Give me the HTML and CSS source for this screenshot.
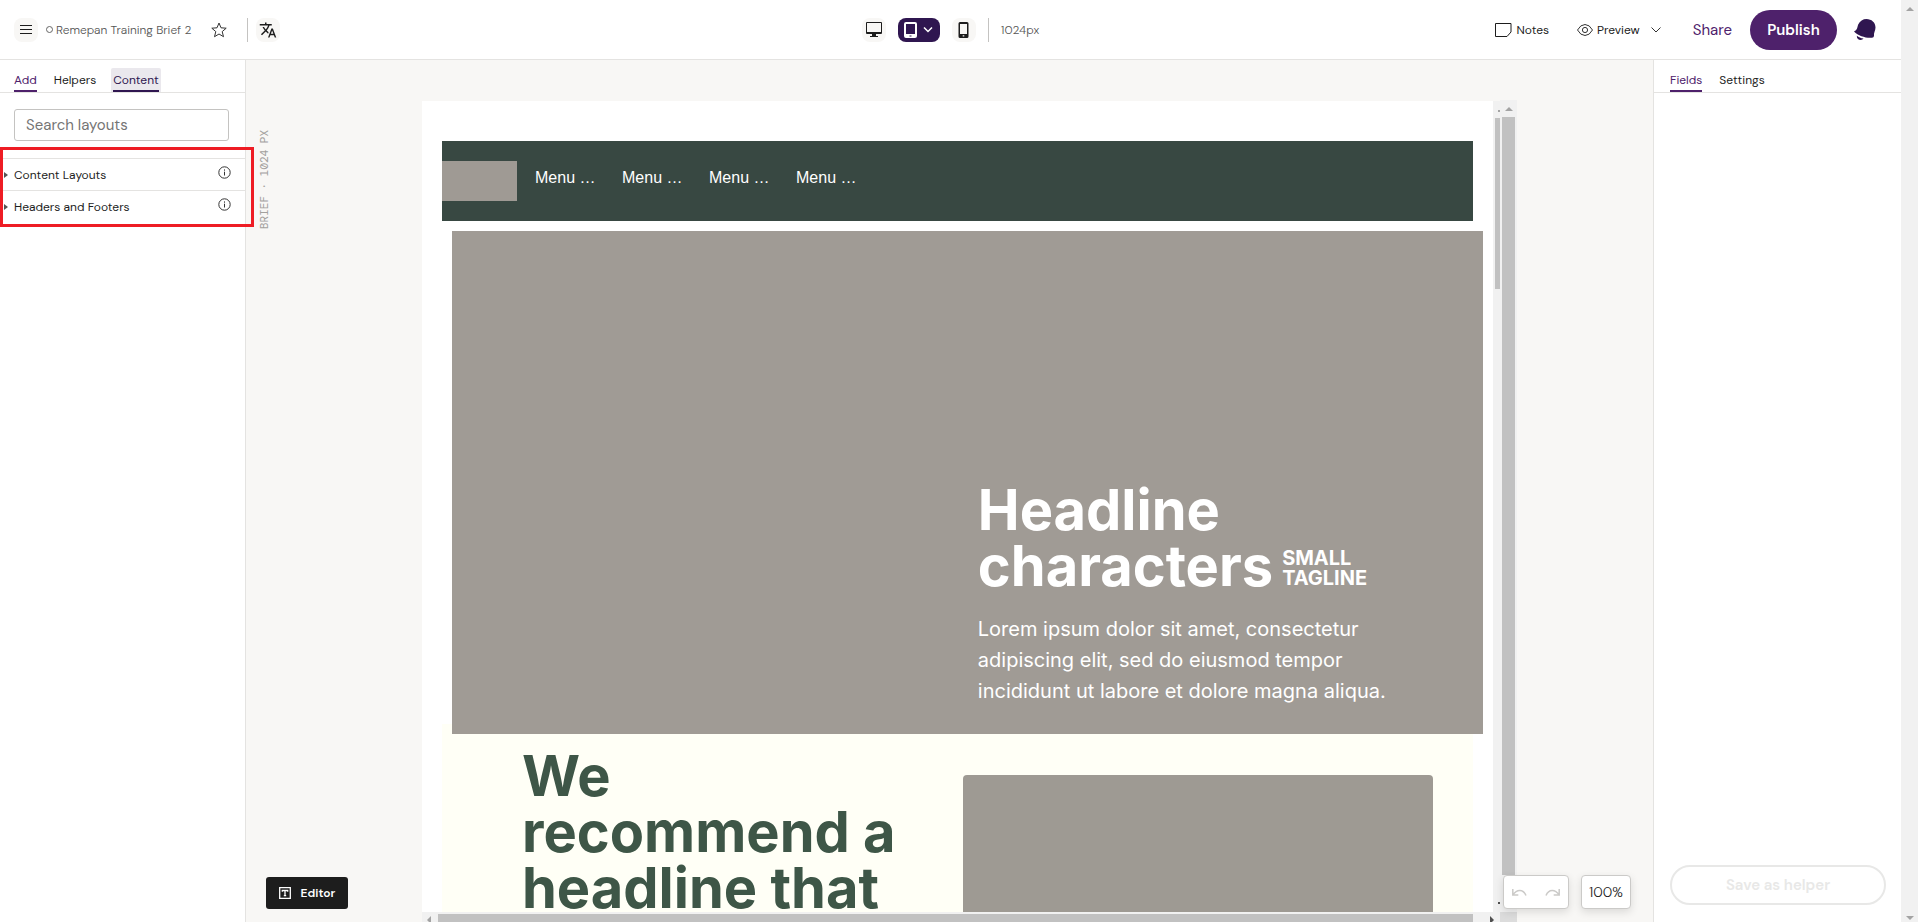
FILE: index.html
```html
<!DOCTYPE html>
<html lang="en">
<head>
    <meta charset="UTF-8">
    <meta name="viewport" content="width=device-width, initial-scale=1.0">
    <title>Remepan Training Brief 2</title>
    <link rel="stylesheet" href="styles.css">
</head>
<body>
    <div class="app">
        <header class="topbar">
            <div class="topbar-left">
                <button class="icon-btn" aria-label="Menu">
                    <svg width="12" height="10" viewBox="0 0 12 10" stroke="#1d1d1d" stroke-width="1"><path d="M0 .5h12M0 4.5h12M0 8.5h12"/></svg>
                </button>
                <span class="status-dot"></span>
                <span class="brief-name">Remepan Training Brief 2</span>
                <button class="plain-btn star-btn" aria-label="Favourite">
                    <svg width="16" height="16" viewBox="0 0 16 16" fill="none" stroke="#333" stroke-linejoin="round"><path d="M8 1l2 4.8 5.2.4-4 3.4 1.3 5.1L8 12l-4.500 2.700 1.300-5.100-4-3.400 5.200-.4z"/></svg>
                </button>
                <span class="divider"></span>
                <button class="icon-btn" aria-label="Translate">
                    <svg width="18" height="18" viewBox="0 0 24 24" fill="#1d1d1d"><path d="M12.870 15.070l-2.540-2.510.03-.03A17.500 17.500 0 0 0 14.070 6H17V4h-7V2H8v2H1v2h11.170C11.500 7.920 10.440 9.750 9 11.350 8.070 10.320 7.300 9.190 6.690 8h-2c.73 1.630 1.730 3.170 2.980 4.560l-5.090 5.020L4 19l5-5 3.110 3.110zM18.500 10h-2L12 22h2l1.120-3h4.750L21 22h2zm-2.620 7l1.620-4.330L19.120 17z"/></svg>
                </button>
            </div>

            <div class="topbar-center">
                <button class="icon-btn" aria-label="Desktop">
                    <svg width="18" height="16" viewBox="0 0 18 16"><path fill="#1d1d1d" fill-rule="evenodd" d="M2 0h14q1 0 1 1v10q0 1-1 1h-5v2h2v1H5v-1h2v-2H2q-1 0-1-1V1q0-1 1-1zm0 1v9h14V1z"/></svg>
                </button>
                <button class="icon-btn tablet-btn" aria-label="Tablet">
                    <svg width="14" height="16" viewBox="0 0 14 16"><path fill="#fff" fill-rule="evenodd" d="M2 0h9q2 0 2 2v12q0 2-2 2H2q-2 0-2-2V2q0-2 2-2zm0 2v10h9V2zm3.500 11.500v1h2v-1z"/></svg>
                    <svg width="10" height="6" viewBox="0 0 10 6" fill="none" stroke="#fff" stroke-width="1.500"><path d="M1 .5l4 4 4-4"/></svg>
                </button>
                <button class="icon-btn" aria-label="Phone">
                    <svg width="11" height="16" viewBox="0 0 11 16"><path fill="#1d1d1d" fill-rule="evenodd" d="M2 0h7q1.500 0 1.500 1.500v13q0 1.500-1.500 1.500H2Q.5 16 .5 14.500v-13Q.5 0 2 0zm0 2v10h7V2zm2.700 11.300v1.200h1.600v-1.200z"/></svg>
                </button>
                <span class="divider"></span>
                <span class="px-label">1024px</span>
            </div>

            <div class="topbar-right">
                <button class="plain-btn notes-btn">
                    <svg width="17" height="14" viewBox="0 0 17 14" fill="none" stroke="#1d1d1d"><path d="M.5.5h15.500v8.500l-4 4.500H.5z"/></svg>
                    Notes
                </button>
                <button class="plain-btn preview-btn">
                    <svg width="16" height="12" viewBox="0 0 16 12" fill="none" stroke="#333"><path d="M.5 6Q3.500.5 8 .5T15.500 6Q12.500 11.500 8 11.500T.5 6z"/><circle cx="8" cy="6" r="2.600"/></svg>
                    Preview
                    <svg class="preview-caret" width="10" height="6" viewBox="0 0 10 6" fill="none" stroke="#333"><path d="M.5.5L5 5 9.500.5"/></svg>
                </button>
                <button class="plain-btn share-btn">Share</button>
                <button class="publish-btn">Publish</button>
                <button class="plain-btn bell-btn" aria-label="Notifications">
                    <svg width="22" height="22" viewBox="0 0 22 22" fill="#2f1650"><path d="M0 12.500C3.500 11 3.200 8 4.200 5.500 5.800 2 9 0 12.500 0 17.500 0 21.500 3.500 21.500 8.500c0 3.500-2 5-1.500 8.500q-.2 1.500-2 1.700C12 19.300 4.500 17 0 12.500z"/><path d="M2.800 16.700c2 1.400 4 2.300 6.700 2.900-1.300 2.400-6.900 2.100-6.700-2.900z"/></svg>
                </button>
            </div>
        </header>

        <div class="main">
            <aside class="sidebar">
                <nav class="tabs">
                    <button class="tab active">Add</button>
                    <button class="tab">Helpers</button>
                    <button class="tab active focused">Content</button>
                </nav>
                <input class="search" type="text" placeholder="Search layouts" aria-label="Search layouts">
                <ul class="layouts">
                    <li class="layout-row">
                        <span class="arrow"></span>
                        <span class="layout-name">Content Layouts</span>
                        <svg class="info" width="13" height="13" viewBox="0 0 13 13" fill="none" stroke="#333"><circle cx="6.500" cy="6.500" r="5.700"/><path d="M6.500 5.700v3.800M6.500 3.400v1.300"/></svg>
                    </li>
                    <li class="layout-row">
                        <span class="arrow"></span>
                        <span class="layout-name">Headers and Footers</span>
                        <svg class="info" width="13" height="13" viewBox="0 0 13 13" fill="none" stroke="#333"><circle cx="6.500" cy="6.500" r="5.700"/><path d="M6.500 5.700v3.800M6.500 3.400v1.300"/></svg>
                    </li>
                </ul>
                <div class="highlight"></div>
            </aside>

            <main class="workspace">
                <div class="rail"><span class="rail-label">BRIEF · 1024 PX</span></div>
                <div class="stage">
                    <div class="frame">
                        <div class="viewport">
                            <div class="canvas">
                                <nav class="site-nav">
                                    <div class="logo"></div>
                                    <a class="menu-link" href="#">Menu …</a>
                                    <a class="menu-link" href="#">Menu …</a>
                                    <a class="menu-link" href="#">Menu …</a>
                                    <a class="menu-link" href="#">Menu …</a>
                                </nav>
                                <section class="hero">
                                    <div class="hero-copy">
                                        <div class="hero-head">
                                            <h1>Headline<br>characters</h1>
                                            <span class="tagline">SMALL<br>TAGLINE</span>
                                        </div>
                                        <p>Lorem ipsum dolor sit amet, consectetur adipiscing elit, sed do eiusmod tempor incididunt ut labore et dolore magna aliqua.</p>
                                    </div>
                                </section>
                                <section class="feature">
                                    <h2>We recommend a headline that</h2>
                                    <div class="feature-image"></div>
                                </section>
                            </div>
                            <div class="inner-scroll">
                                <i class="tick-up"></i>
                                <i class="inner-thumb"></i>
                                <i class="tick-down"></i>
                            </div>
                        </div>
                        <div class="h-scroll">
                            <i class="arrow-left"></i>
                            <i class="h-thumb"></i>
                            <i class="arrow-right"></i>
                        </div>
                    </div>
                    <div class="outer-scroll">
                        <i class="arrow-up"></i>
                        <i class="outer-thumb"></i>
                        <i class="corner"></i>
                    </div>
                </div>

                <button class="editor-btn">
                    <svg width="12" height="12" viewBox="0 0 12 12" fill="none" stroke="#fff" stroke-width="1.300"><path d="M.7.7h10.600v10.600H.7zM3.300 4.800V3.500h5.400v1.300M6 3.500v5.200M4.800 8.700h2.400"/></svg>
                    Editor
                </button>
                <div class="zoom-tools">
                    <div class="history">
                        <button class="plain-btn" aria-label="Undo">
                            <svg width="15" height="7" viewBox="0 0 15 7" fill="none" stroke="#cbcac8" stroke-width="1.500"><path d="M.8 0v6h5.500M1 5.700C4.500.5 11-.8 14 6.500"/></svg>
                        </button>
                        <button class="plain-btn" aria-label="Redo">
                            <svg width="15" height="7" viewBox="0 0 15 7" fill="none" stroke="#cbcac8" stroke-width="1.500"><path d="M14.200 0v6H8.700M14 5.700C10.500.5 4-.8 1 6.500"/></svg>
                        </button>
                    </div>
                    <button class="zoom-level">100%</button>
                </div>
            </main>

            <aside class="inspector">
                <nav class="tabs">
                    <button class="tab active">Fields</button>
                    <button class="tab">Settings</button>
                </nav>
                <button class="save-btn" disabled>Save as helper</button>
            </aside>
        </div>
    </div>
    <div class="page-scroll">
        <i class="arrow-up"></i>
        <i class="arrow-down"></i>
    </div>
</body>
</html>
```
FILE: styles.css
```css
* {
    box-sizing: border-box;
}
body {
    margin: 0;
    height: 100vh;
    display: flex;
    overflow: hidden;
    font-family: "DM Sans", Inter, sans-serif;
    font-size: 12px;
    color: #1d1d1d;
    background: #fff;
}
button {
    font-family: inherit;
    font-size: 12px;
    color: inherit;
    cursor: pointer;
}
svg {
    display: block;
    flex: none;
}
h1, h2, p, ul {
    margin: 0;
    padding: 0;
}
.app {
    flex: 1;
    min-width: 0;
    display: flex;
    flex-direction: column;
}

/* top bar */
.topbar {
    flex: none;
    height: 60px;
    display: grid;
    grid-template-columns: 1fr auto 1fr;
    align-items: center;
    border-bottom: 1px solid #e4e3e1;
}
.topbar-left, .topbar-center, .topbar-right {
    display: flex;
    align-items: center;
}
.topbar-left {
    padding-left: 14px;
}
.topbar-center {
    gap: 12px;
}
.topbar-right {
    justify-content: flex-end;
    padding-right: 25px;
}
.icon-btn {
    width: 24px;
    height: 24px;
    padding: 0;
    display: flex;
    align-items: center;
    justify-content: center;
    border: none;
    border-radius: 8px;
    background: #f8f7f5;
}
.tablet-btn {
    width: 42px;
    gap: 5px;
    background: #2f1650;
}
.plain-btn {
    display: flex;
    align-items: center;
    padding: 0;
    border: none;
    background: none;
}
.status-dot {
    width: 7px;
    height: 7px;
    margin: 0 3px 0 8px;
    border: 1px solid #666;
    border-radius: 50%;
}
.brief-name, .px-label, .share-btn, .zoom-level {
    font-optical-sizing: none;
}
.brief-name, .px-label {
    font-weight: 300;
    color: #555;
}
.star-btn {
    margin: 0 20px;
}
.divider {
    width: 1px;
    height: 24px;
    background: #c4c3c1;
}
.topbar-left .divider {
    margin-right: 8px;
}
.notes-btn {
    gap: 4px;
    margin-right: 28px;
}
.preview-btn {
    gap: 4px;
    margin-right: 32px;
}
.preview-caret {
    margin-left: 7px;
}
.share-btn {
    margin-right: 18px;
    font-size: 15px;
    color: #4e216b;
}
.publish-btn {
    width: 87px;
    height: 40px;
    margin-right: 17px;
    padding: 0;
    border: none;
    border-radius: 20px;
    background: #4e216b;
    color: #fff;
    font-size: 15px;
    font-weight: 600;
}

/* side panels */
.main {
    flex: 1;
    min-height: 0;
    display: flex;
}
.sidebar {
    position: relative;
    z-index: 2;
    flex: none;
    width: 246px;
    border-right: 1px solid #e4e3e1;
}
.inspector {
    flex: none;
    width: 248px;
    display: flex;
    flex-direction: column;
    justify-content: space-between;
    border-left: 1px solid #e4e3e1;
}
.tabs {
    height: 33px;
    display: flex;
    align-items: flex-end;
    gap: 17px;
    padding: 0 14px;
    border-bottom: 1px solid #e4e3e1;
}
.inspector .tabs {
    padding: 0 16px;
}
.tab {
    height: 24px;
    padding: 2px 0 0;
    border: none;
    border-bottom: 2px solid transparent;
    background: none;
}
.tab.active {
    border-color: #4e216b;
    color: #4e216b;
}
.tab.focused {
    border-color: #2f1650;
    border-radius: 2px 2px 0 0;
    background: #eae8ed;
    box-shadow: -2px 0 #eae8ed, 2px 0 #eae8ed;
    color: #2f1650;
}
.search {
    display: block;
    width: calc(100% - 30px);
    height: 32px;
    margin: 16px 16px 17px 14px;
    padding: 0 11px;
    border: 1px solid #c4c3c1;
    border-radius: 3px;
    font-family: inherit;
    font-size: 15px;
}
.search::placeholder {
    color: #757575;
}
.layouts {
    list-style: none;
}
.layout-row {
    height: 32px;
    display: flex;
    align-items: center;
    padding-right: 14px;
    border-top: 1px solid #e4e3e1;
}
.arrow {
    width: 4px;
    margin: 0 6px 0 4px;
    border: solid transparent;
    border-width: 3px 0 3px 4px;
    border-left-color: #555;
}
.layout-name {
    flex: 1;
}
.info {
    margin-bottom: 5px;
}
.highlight {
    position: absolute;
    top: 87px;
    left: 0;
    right: -9px;
    height: 80px;
    border: 3px solid #ee1c24;
    pointer-events: none;
}
.save-btn {
    height: 40px;
    margin: 0 15px 17px 16px;
    border: 2px solid #e8e8e7;
    border-radius: 20px;
    background: #fff;
    color: #e8e8e7;
    font-size: 15px;
    font-weight: 600;
}

/* workspace */
.workspace {
    position: relative;
    flex: 1;
    min-width: 0;
    display: flex;
    background: #f8f7f5;
}
.rail {
    flex: none;
    width: 40px;
    padding: 70px 0 0 11px;
}
.rail-label {
    writing-mode: vertical-rl;
    transform: rotate(180deg);
    font-family: "DM Mono", "Liberation Mono", monospace;
    font-size: 11px;
    line-height: 14px;
    color: #a3a19e;
}
.stage {
    flex: 1;
    min-width: 0;
    display: flex;
    justify-content: center;
    padding-top: 40px;
}
.frame {
    flex: 0 1 1078px;
    min-width: 0;
    display: flex;
    flex-direction: column;
    padding-top: 1px;
}
.viewport {
    flex: 1;
    min-height: 0;
    display: flex;
    overflow: hidden;
}
.canvas {
    flex: 1;
    min-width: 0;
    padding: 40px 20px 0;
    background: #fff;
    font-family: Inter, sans-serif;
}
.site-nav {
    height: 80px;
    display: flex;
    align-items: center;
    background: #384842;
}
.logo {
    width: 75px;
    height: 40px;
    margin-right: 18px;
    background: #9f9a94;
}
.menu-link {
    width: 87px;
    padding-bottom: 6px;
    color: #fff;
    font-family: "Liberation Sans", Arial, sans-serif;
    font-size: 16px;
    line-height: 20px;
    text-decoration: none;
}
.hero {
    position: relative;
    z-index: 1;
    height: 503px;
    margin: 10px -10px 0 10px;
    padding-bottom: 27px;
    display: flex;
    align-items: flex-end;
    justify-content: flex-end;
    background: #a09b95;
    color: #fff;
}
.hero-copy {
    width: 49%;
}
.hero-head {
    display: flex;
    align-items: flex-end;
    gap: 9px;
    margin-bottom: 20px;
}
.hero h1, .feature h2 {
    font-size: 56px;
    line-height: 56px;
    font-weight: 700;
}
.tagline {
    padding-bottom: 6px;
    font-size: 20px;
    line-height: 20px;
    font-weight: 700;
}
.hero p {
    max-width: 420px;
    font-size: 20px;
    line-height: 31px;
}
.feature {
    display: flex;
    justify-content: space-between;
    margin-top: -10px;
    padding: 24px 40px 0 80px;
    background: #fffff6;
}
.feature h2 {
    width: 390px;
    color: #3e5647;
}
.feature-image {
    width: 470px;
    height: 300px;
    margin-top: 27px;
    border-radius: 4px;
    background: #9e9a93;
}

/* scrollbars */
.inner-scroll {
    flex: none;
    width: 7px;
    display: flex;
    flex-direction: column;
    align-items: flex-end;
    background: #f1f1f1;
}
.inner-thumb {
    width: 5px;
    height: 171px;
    margin-bottom: auto;
    background: #c1c1c1;
}
.tick-up, .tick-down {
    width: 2px;
    height: 2px;
    margin: 9px 0 6px;
    background: #a3a3a3;
}
.tick-down {
    background: #505050;
    margin-bottom: 8px;
}
.h-scroll {
    flex: none;
    height: 10px;
    display: flex;
    padding-top: 2px;
    overflow: hidden;
    background: #f1f1f1;
}
.h-thumb {
    flex: 1;
    height: 13px;
    margin: 0 17px 0 7px;
    background: #c1c1c1;
}
.arrow-left, .arrow-right {
    width: 0;
    height: 0;
    margin-top: 2px;
    border: solid transparent;
    border-width: 4px 0;
}
.arrow-left {
    margin-left: 5px;
    border-right: 4px solid #a3a3a3;
}
.arrow-right {
    margin-right: 6px;
    border-left: 4px solid #505050;
}
.outer-scroll, .page-scroll {
    flex: none;
    width: 17px;
    display: flex;
    flex-direction: column;
    align-items: center;
    background: #f1f1f1;
}
.arrow-up, .arrow-down {
    width: 0;
    height: 0;
    border: solid transparent;
    border-width: 0 4px;
}
.arrow-up {
    margin: 7px 0 6px;
    border-bottom: 4px solid #a3a3a3;
}
.arrow-down {
    margin: auto 0 2px;
    border-top: 4px solid #a3a3a3;
}
.outer-thumb {
    flex: 1;
    width: 13px;
    margin-bottom: 37px;
    background: #c1c1c1;
}
.corner {
    width: 17px;
    height: 10px;
    background: #dcdcdc;
}

/* floating tools */
.editor-btn {
    position: absolute;
    left: 20px;
    bottom: 13px;
    width: 82px;
    height: 32px;
    display: flex;
    align-items: center;
    justify-content: center;
    gap: 10px;
    padding: 0;
    border: none;
    border-radius: 3px;
    background: #1d1d1d;
    color: #fff;
    font-weight: 600;
}
.zoom-tools {
    position: absolute;
    right: 22px;
    bottom: 13px;
    display: flex;
    gap: 12px;
}
.history, .zoom-level {
    height: 34px;
    border: 1px solid #cbcac8;
    border-radius: 4px;
    background: #fff;
    box-shadow: 0 3px 8px rgba(0, 0, 0, 0.12);
}
.history {
    width: 66px;
    display: flex;
    align-items: center;
    justify-content: space-between;
    padding: 0 8px;
}
.zoom-level {
    width: 50px;
    padding: 0;
    font-size: 14px;
    font-weight: 300;
}
```
